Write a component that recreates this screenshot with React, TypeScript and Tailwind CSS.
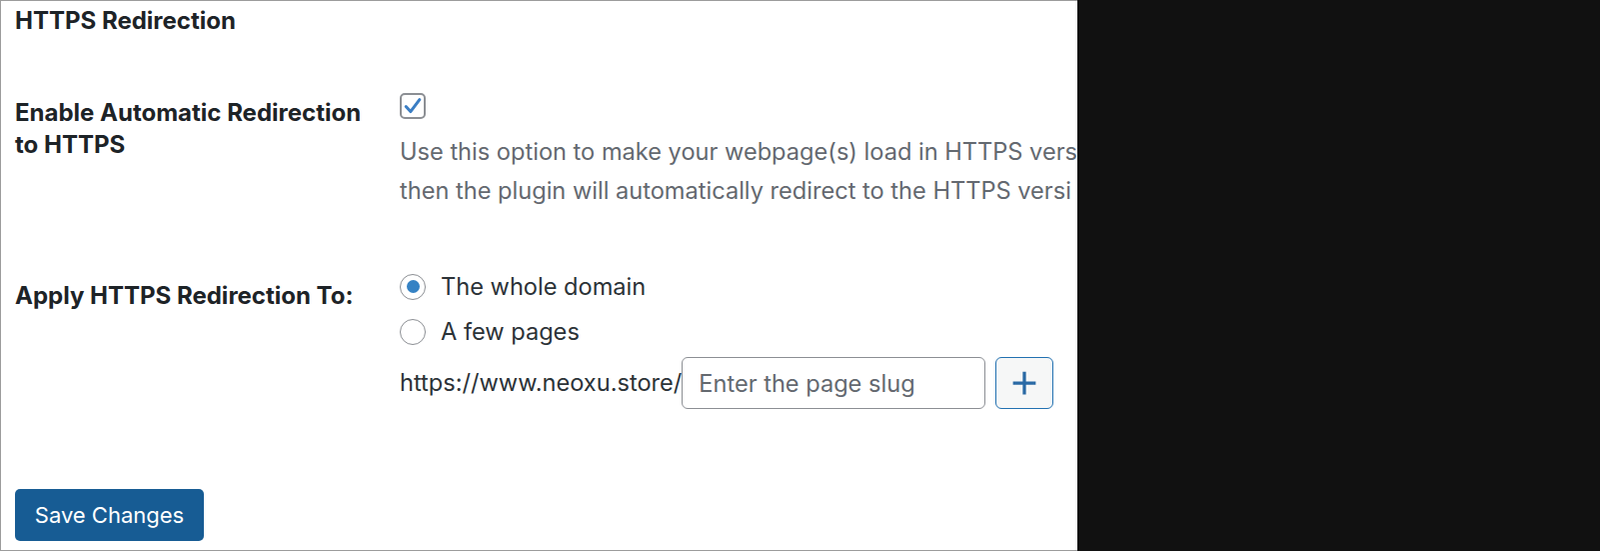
import React from "react";

const font = { fontFamily: "Inter, 'Noto Sans', sans-serif" };

function Radio({ checked }: { checked?: boolean }) {
  return (
    <span className="flex h-[26px] w-[26px] shrink-0 items-center justify-center rounded-full border-[1.5px] border-[#8c8f94] bg-white">
      {checked && <span className="h-[13px] w-[13px] rounded-full bg-[#3582c4]" />}
    </span>
  );
}

export default function App() {
  return (
    <div className="flex h-[551px] w-[1601px] bg-[#111111]" style={font}>
      <div className="h-[551px] w-[1078px] shrink-0 overflow-hidden border-y border-l border-[#9c9c9c] bg-white pl-[14px]">
        <h2 className="mt-[6px] text-[24px] font-bold leading-[28px] text-[#1d2327]">HTTPS Redirection</h2>

        <div className="mt-[58px] flex">
          <div className="w-[385px] shrink-0 pt-[4px]">
            <p className="text-[24px] font-bold leading-[32px] text-[#1d2327]">
              Enable Automatic Redirection
              <br />
              to HTTPS
            </p>
          </div>
          <div className="min-w-0">
            <span className="flex h-[26px] w-[26px] items-center justify-center rounded-[5px] border-2 border-[#8c8f94] bg-white">
              <svg viewBox="0 0 20 20" className="h-[20px] w-[20px]">
                <path d="M3.2 10.6 L7.8 15.6 L16.8 3.6" fill="none" stroke="#3b7ec4" strokeWidth="3" strokeLinecap="round" strokeLinejoin="round" />
              </svg>
            </span>
            <div className="mt-[13px] text-[23.6px] leading-[39px] text-[#646970]">
              <p className="whitespace-nowrap">Use this option to make your webpage(s) load in HTTPS vers</p>
              <p className="whitespace-nowrap">then the plugin will automatically redirect to the HTTPS versi</p>
            </div>
          </div>
        </div>

        <div className="mt-[54px] flex">
          <div className="w-[385px] shrink-0 pt-[16px]">
            <p className="text-[24px] font-bold leading-[32px] text-[#1d2327]">Apply HTTPS Redirection To:</p>
          </div>
          <div className="text-[23.6px] text-[#2c3338]">
            <label className="flex h-[45px] items-center gap-[15px]">
              <Radio checked />
              <span>The whole domain</span>
            </label>
            <label className="flex h-[45px] items-center gap-[15px]">
              <Radio />
              <span>A few pages</span>
            </label>
            <div className="mt-[3px] flex items-center">
              <span className="text-[#2c3338]">https://www.neoxu.store/</span>
              <input
                placeholder="Enter the page slug"
                className="h-[52px] w-[304px] rounded-[6px] border-[1.5px] border-[#8c8f94] bg-white px-[16px] text-[23.6px] text-[#2c3338] placeholder:text-[#646970] outline-none"
                style={font}
              />
              <button className="ml-[10px] flex h-[52px] w-[58px] items-center justify-center rounded-[6px] border-[1.5px] border-[#2271b1] bg-[#f6f7f7]">
                <svg viewBox="0 0 24 24" className="h-[26px] w-[26px]">
                  <path d="M12 1.5 V22.5 M1.5 12 H22.5" stroke="#2a6aa5" strokeWidth="3" />
                </svg>
              </button>
            </div>
          </div>
        </div>

        <button className="mt-[80px] h-[52px] w-[189px] rounded-[5px] bg-[#175c94] text-[22px] text-white" style={font}>
          Save Changes
        </button>
      </div>
      <div className="flex-1 bg-[#111111]" />
    </div>
  );
}
